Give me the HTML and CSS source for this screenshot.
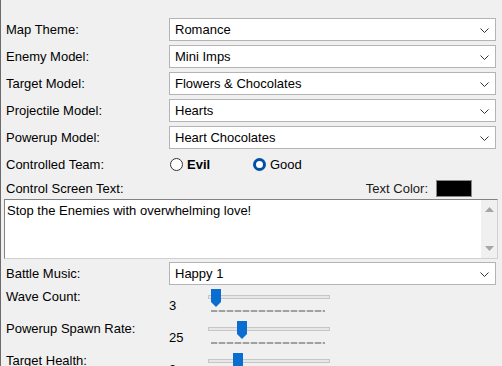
FILE: index.html
```html
<!DOCTYPE html>
<html lang="en">
<head>
    <meta charset="UTF-8">
    <title>Game Settings</title>
    <link rel="stylesheet" href="styles.css">
</head>
<body>
    <div class="panel">
        <div class="row">
            <span class="label">Map Theme:</span>
            <div class="combo">Romance<svg class="chev" width="9" height="6" viewBox="0 0 9 6"><path d="M0.5 0.5 L4.5 4.5 L8.5 0.5" fill="none" stroke="#333" stroke-width="1"/></svg></div>
        </div>
        <div class="row">
            <span class="label">Enemy Model:</span>
            <div class="combo">Mini Imps<svg class="chev" width="9" height="6" viewBox="0 0 9 6"><path d="M0.5 0.5 L4.5 4.5 L8.5 0.5" fill="none" stroke="#333" stroke-width="1"/></svg></div>
        </div>
        <div class="row">
            <span class="label">Target Model:</span>
            <div class="combo">Flowers &amp; Chocolates<svg class="chev" width="9" height="6" viewBox="0 0 9 6"><path d="M0.5 0.5 L4.5 4.5 L8.5 0.5" fill="none" stroke="#333" stroke-width="1"/></svg></div>
        </div>
        <div class="row">
            <span class="label">Projectile Model:</span>
            <div class="combo">Hearts<svg class="chev" width="9" height="6" viewBox="0 0 9 6"><path d="M0.5 0.5 L4.5 4.5 L8.5 0.5" fill="none" stroke="#333" stroke-width="1"/></svg></div>
        </div>
        <div class="row">
            <span class="label">Powerup Model:</span>
            <div class="combo">Heart Chocolates<svg class="chev" width="9" height="6" viewBox="0 0 9 6"><path d="M0.5 0.5 L4.5 4.5 L8.5 0.5" fill="none" stroke="#333" stroke-width="1"/></svg></div>
        </div>
        <div class="row">
            <span class="label">Controlled Team:</span>
            <div class="radios">
                <span class="radio"><span class="dot"></span><b>Evil</b></span>
                <span class="radio checked"><span class="dot"></span>Good</span>
            </div>
        </div>
        <div class="text-head">
            <span class="label">Control Screen Text:</span>
            <span class="color-pick">Text Color: <span class="swatch"></span></span>
        </div>
        <div class="textbox">
            <div class="text">Stop the Enemies with overwhelming love!</div>
            <div class="scroll">
                <svg width="9" height="5" viewBox="0 0 9 5"><path d="M0 5 L4.5 0 L9 5 Z" fill="#a6a6a6"/></svg>
                <svg width="9" height="5" viewBox="0 0 9 5"><path d="M0 0 L4.5 5 L9 0 Z" fill="#a6a6a6"/></svg>
            </div>
        </div>
        <div class="row">
            <span class="label">Battle Music:</span>
            <div class="combo">Happy 1<svg class="chev" width="9" height="6" viewBox="0 0 9 6"><path d="M0.5 0.5 L4.5 4.5 L8.5 0.5" fill="none" stroke="#333" stroke-width="1"/></svg></div>
        </div>
        <div class="slider-row">
            <span class="label">Wave Count:</span>
            <span class="value">3</span>
            <div class="slider"><div class="track"></div><div class="thumb" style="left: 3px"></div><div class="ticks"></div></div>
        </div>
        <div class="slider-row">
            <span class="label">Powerup Spawn Rate:</span>
            <span class="value">25</span>
            <div class="slider"><div class="track"></div><div class="thumb" style="left: 29px"></div><div class="ticks"></div></div>
        </div>
        <div class="slider-row">
            <span class="label">Target Health:</span>
            <span class="value">3</span>
            <div class="slider"><div class="track"></div><div class="thumb" style="left: 25px"></div><div class="ticks"></div></div>
        </div>
    </div>
</body>
</html>
```
FILE: styles.css
```css
body {
    margin: 0;
    background: #f0f0f0;
    font-family: "Liberation Sans", Arial, sans-serif;
    font-size: 13px;
    color: #000;
    overflow: hidden;
}
.panel {
    border-left: 1px solid #6b6b6b;
    height: 366px;
    padding-top: 18px;
    box-sizing: border-box;
}
.row {
    display: flex;
    align-items: center;
    height: 23px;
    margin-bottom: 4px;
}
.label {
    width: 163px;
    padding-left: 5px;
    flex: none;
}
.combo {
    width: 327px;
    height: 23px;
    box-sizing: border-box;
    background: #fff;
    border: 1px solid #b4b4b4;
    display: flex;
    align-items: center;
    padding-left: 5px;
    position: relative;
}
.chev {
    position: absolute;
    right: 6px;
    top: 9px;
}
.radios {
    display: flex;
    align-items: center;
}
.radio {
    display: flex;
    align-items: center;
    width: 81px;
}
.radio b {
    font-weight: bold;
}
.dot {
    width: 11px;
    height: 11px;
    border: 1px solid #333;
    border-radius: 50%;
    margin: 0 4px 0 1px;
    background: #fff;
}
.checked .dot {
    border: 3px solid #0050a8;
    width: 7px;
    height: 7px;
    margin-left: 3px;
    background: #fff;
}
.text-head {
    display: flex;
    justify-content: space-between;
    align-items: center;
    height: 20px;
    margin-top: -2px;
}
.color-pick {
    display: flex;
    align-items: center;
    padding-right: 30px;
    color: #1a1a1a;
}
.swatch {
    width: 34px;
    height: 15px;
    background: #000;
    border: 1px solid #888;
    margin-left: 8px;
}
.textbox {
    display: flex;
    margin: 1px 4px 3px 3px;
    height: 58px;
    border: 1px solid #828282;
    border-right-color: #d0d0d0;
    border-bottom-color: #d0d0d0;
    background: #fff;
}
.text {
    flex: 1;
    padding: 3px 2px;
}
.scroll {
    width: 16px;
    background: #f0f0f0;
    display: flex;
    flex-direction: column;
    justify-content: space-between;
    align-items: center;
    padding: 7px 0;
}
.slider-row {
    display: flex;
    height: 31px;
    margin-top: 1px;
}
.value {
    width: 39px;
    padding-top: 9px;
    flex: none;
}
.slider {
    position: relative;
    width: 122px;
    height: 31px;
}
.track {
    position: absolute;
    left: 0;
    right: 0;
    top: 6px;
    height: 2px;
    border: 1px solid #c6c6c6;
    background: #e7e7e7;
}
.thumb {
    position: absolute;
    top: 0;
    width: 10px;
    height: 18px;
    background: #0a6ed1;
    clip-path: polygon(0 0, 100% 0, 100% 72%, 50% 100%, 0 72%);
}
.ticks {
    position: absolute;
    left: 3px;
    right: 5px;
    top: 21px;
    height: 2px;
    background: repeating-linear-gradient(90deg, #a0a0a0 0 6px, #d8d8d8 6px 8px);
}
```
